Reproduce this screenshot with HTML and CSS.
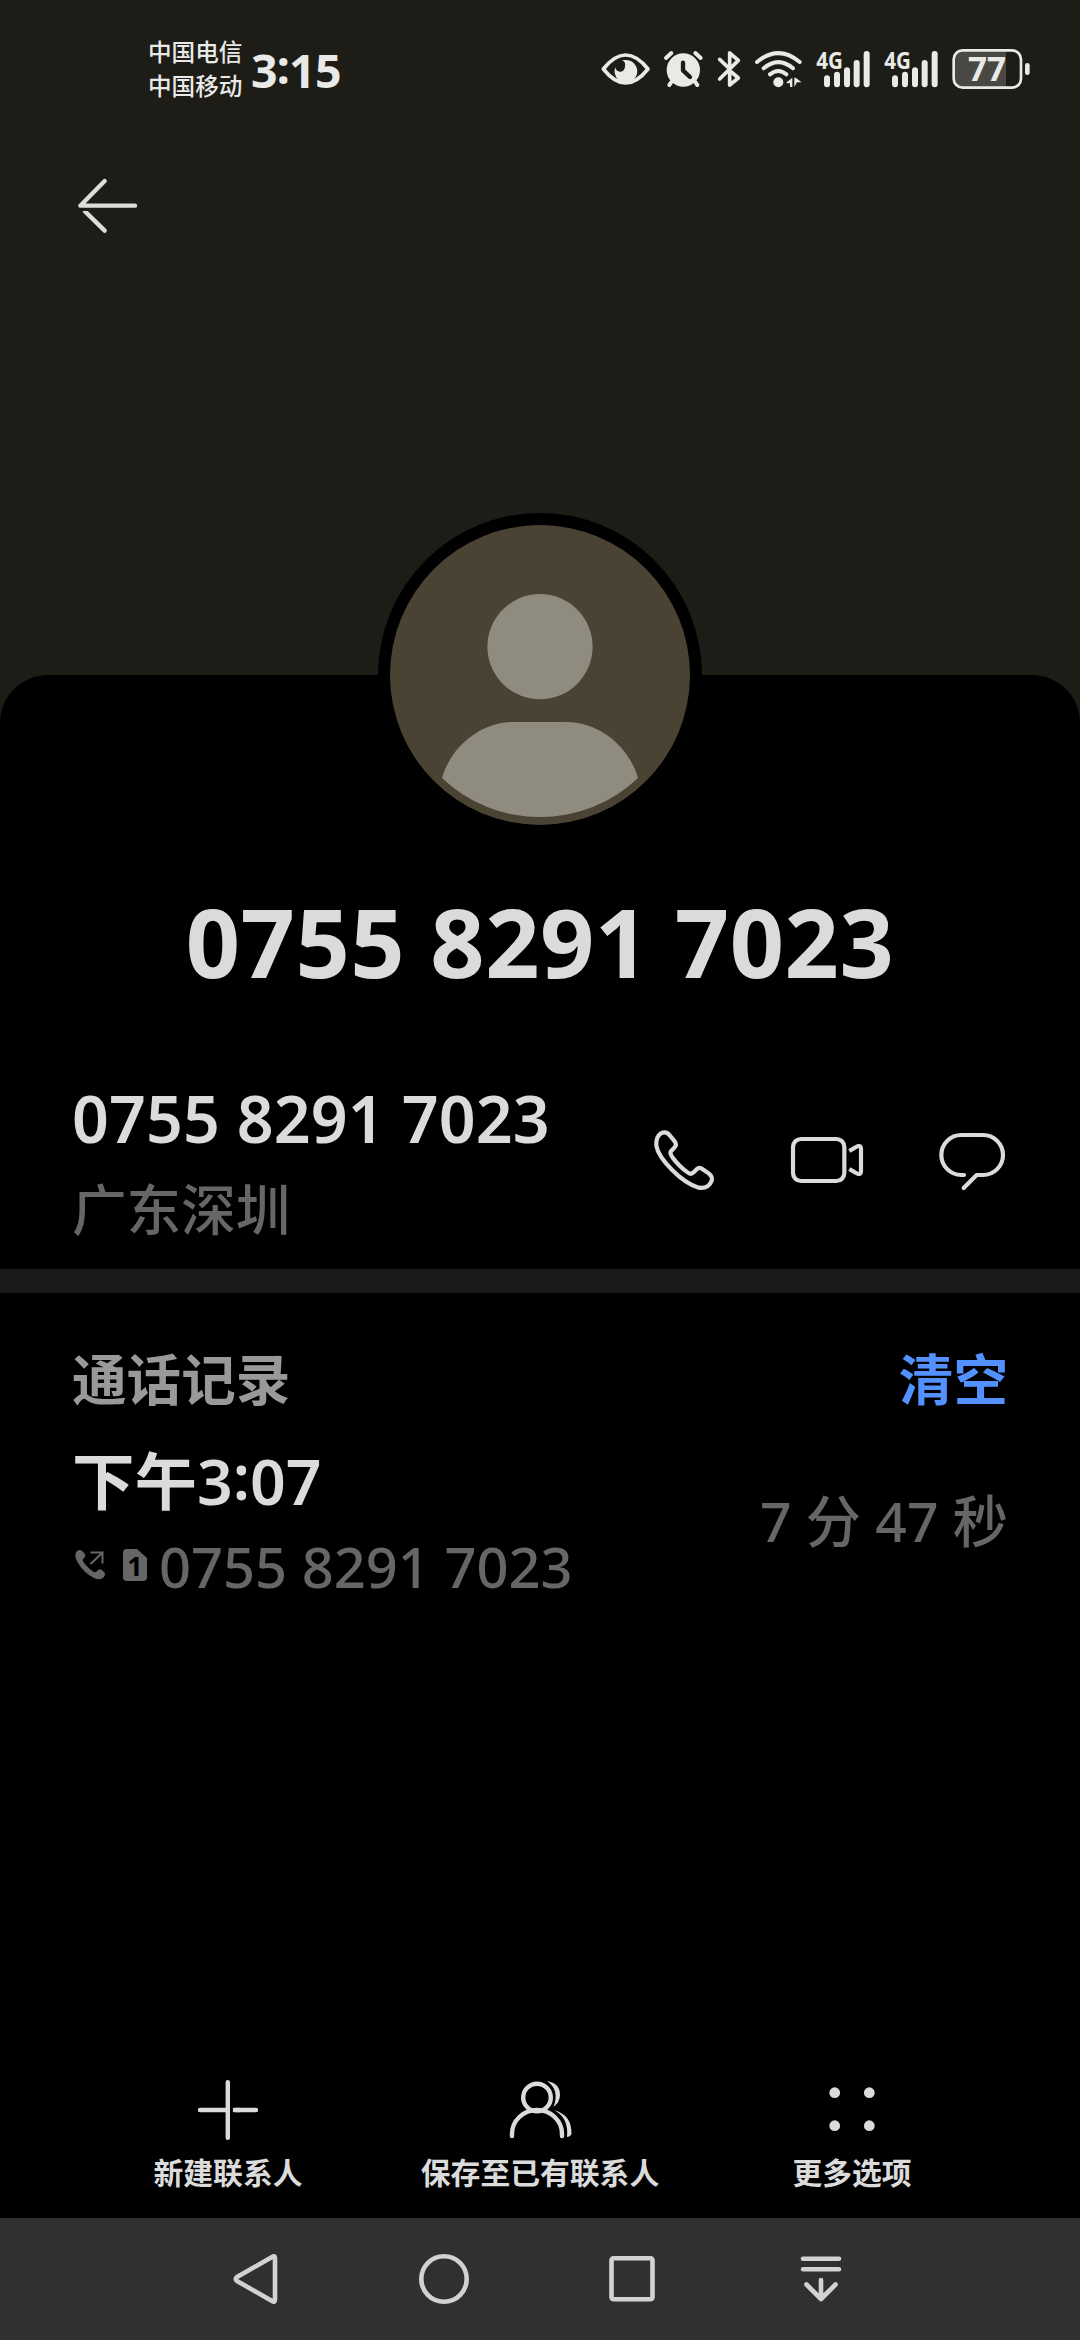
FILE: index.html
```html
<!DOCTYPE html>
<html lang="zh-CN">
<head>
<meta charset="utf-8">
<title>联系人详情</title>
<link rel="stylesheet" href="styles.css">
</head>
<body>
<div class="screen">
  <header class="status">
    <div class="carriers"><span>中国电信</span><span>中国移动</span></div>
    <div class="clock">3<span class="colon">:</span>15</div>
    <div class="status-icons">
      <svg class="eye" width="52" height="42" viewBox="30 54 156 126"><path d="M40 117Q107 33 174 117Q107 201 40 117Z" fill="none" stroke="#e9e9e7" stroke-width="11" stroke-linejoin="round"/><path d="M106 90A34 34 0 1 1 76 112A14 14 0 0 0 91 125Q105 124 105 108Q108 97 96 91Z" fill="#e9e9e7"/></svg>
      <svg class="alarm" width="42" height="42" viewBox="217 54 126 126"><circle cx="281" cy="120" r="50" fill="#e9e9e7"/><path d="M229 84L245 69M333 84L317 69M246 155L239 165M316 155L323 165" stroke="#e9e9e7" stroke-width="12" stroke-linecap="round"/><path d="M280 98V121L301 141" fill="none" stroke="#1d1c17" stroke-width="13" stroke-linecap="round" stroke-linejoin="round"/></svg>
      <svg class="bluetooth" width="26" height="42" viewBox="378 54 78 126"><path d="M389 88L419 117M389 147L445 91L419 69V108M445 144L419 165V132L424 126Z" fill="none" stroke="#e9e9e7" stroke-width="11" stroke-linecap="round" stroke-linejoin="round"/></svg>
      <svg class="wifi" width="52" height="42" viewBox="490 54 156 126"><g fill="none" stroke="#e9e9e7" stroke-width="12" stroke-linecap="round"><path d="M502 96Q566 43 630 96M522 115Q566 78 610 115M541 133Q566 113 590 133"/></g><circle cx="566" cy="157" r="15" fill="#e9e9e7"/><path d="M591 157L608 143V171H601V160H591ZM614 143H618L636 157H622L614 171Z" fill="#e9e9e7"/></svg>
      <svg class="signal" width="58" height="42" viewBox="42 54 174 126"><text class="g4" x="49" y="116" textLength="80" lengthAdjust="spacingAndGlyphs">4G</text><path d="M81 145V163M111 134V163M141 121V163M170 99V163M200 72V163" stroke="#e9e9e7" stroke-width="18" stroke-linecap="round"/></svg>
      <svg class="signal second" width="58" height="42" viewBox="42 54 174 126"><text class="g4" x="49" y="116" textLength="80" lengthAdjust="spacingAndGlyphs">4G</text><path d="M81 145V163M111 134V163M141 121V163M170 99V163M200 72V163" stroke="#e9e9e7" stroke-width="18" stroke-linecap="round"/></svg>
      <svg class="battery" width="80" height="42" viewBox="453 54 240 126"><path d="M487 61H618V172H487Q461 172 461 146V87Q461 61 487 61Z" fill="#494842"/><rect x="461" y="61" width="202" height="112" rx="27" fill="none" stroke="#e9e9e7" stroke-width="8"/><rect x="675" y="99" width="14" height="36" rx="7" fill="#e9e9e7"/><text class="level" x="504" y="153" textLength="114" lengthAdjust="spacingAndGlyphs">77</text></svg>
    </div>
  </header>

  <div class="appbar">
    <svg width="64" height="60" viewBox="78 48 192 180"><g fill="none" stroke="#deded9" stroke-width="13" stroke-linecap="round" stroke-linejoin="round"><path d="M164 63L91 137H255"/><path d="M105 154L164 212"/></g><path d="M80 145H140V153H80Z" fill="#1d1c17"/></svg>
  </div>

  <main class="sheet">
    <svg class="avatar" width="324" height="324" viewBox="378 513 324 324"><circle cx="540" cy="675" r="162"/><circle cx="540" cy="675" r="150" fill="#4a4233"/><circle cx="540" cy="646.7" r="52.6" fill="#908b7f"/><path d="M514 722H566C600 722 629 747 638 778A142.3 142.3 0 0 1 442 778C451 747 480 722 514 722Z" fill="#908b7f"/></svg>
    <h1>0755 8291 7023</h1>

    <section class="number-row">
      <div>
        <div class="number">0755 8291 7023</div>
        <div class="region">广东深圳</div>
      </div>
      <div class="actions">
        <svg width="64" height="64" viewBox="96 114 192 192"><path d="M151 138L164 154Q172 164 163 173L154 182Q148 188 156 200Q176 228 204 248Q213 255 221 247L230 238Q238 230 247 237L267 251Q278 260 275 272Q265 297 236 293C183 278 115 205 109 167Q107 141 123 130Q139 122 151 138Z"/></svg>
        <svg width="76" height="64" viewBox="510 114 228 192"><rect x="522" y="147" width="154" height="126" rx="24"/><path class="butt" d="M691 183L711 171Q726 163 726 178V242Q726 257 711 249L691 237"/></svg>
        <svg width="68" height="64" viewBox="954 114 204 192"><path d="M1032 255H1024A60 60 0 0 1 1024 135H1089A60 60 0 0 1 1089 255H1070L1031 294"/></svg>
      </div>
    </section>

    <section class="history">
      <div class="history-head"><h2>通话记录</h2><a>清空</a></div>
      <div class="call">
        <div>
          <div class="when">下午3<span class="colon">:</span>07</div>
          <div class="call-number">
            <svg class="out" width="30" height="32" viewBox="0 0 30 32"><path d="M2 2Q6-1 9 4Q12 7 8 10Q7 12 10 15Q15 21 19 23Q21 24 23 21Q26 19 29 23Q31 25 29 28Q25 32 19 29Q9 24 3 14Q-2 6 2 2Z" fill="#666"/><path d="M15.5 3.5H27.5V14.5M15.5 15L27 4" fill="none" stroke="#666" stroke-width="2"/></svg>
            <svg class="sim" width="24" height="32" viewBox="0 0 24 32"><path d="M4 0H14L24 9V28Q24 32 20 32H4Q0 32 0 28V4Q0 0 4 0Z" fill="#666"/><text x="12" y="26.5" text-anchor="middle">1</text></svg>
            <span>0755 8291 7023</span>
          </div>
        </div>
        <div class="duration">7 分 47 秒</div>
      </div>
    </section>
  </main>

  <footer class="toolbar">
    <div class="tool"><svg width="64" height="64" viewBox="196 2078 64 64"><path d="M227.8 2082.2V2137.8M200 2110H227M236 2110H256"/><path class="butt" d="M232.9 2110H240"/></svg><span>新建联系人</span></div>
    <div class="tool"><svg width="64" height="64" viewBox="508 2078 64 64"><circle cx="537" cy="2097.5" r="13.8"/><path d="M512 2136V2134A25 24 0 0 1 562 2134V2136"/><path class="solid" d="M547 2081Q560 2083 560 2095Q560 2102 553.5 2107Q560 2090 547 2081ZM554 2110Q572 2115 571.5 2134Q570 2137 567 2137Q569 2118 554 2110Z"/></svg><span>保存至已有联系人</span></div>
    <div class="tool"><svg width="64" height="64" viewBox="820 2078 64 64"><g class="solid"><circle cx="834.7" cy="2092.7" r="5.4"/><circle cx="869.3" cy="2092.7" r="5.4"/><circle cx="834.7" cy="2125.7" r="5.4"/><circle cx="869.3" cy="2125.7" r="5.4"/></g></svg><span>更多选项</span></div>
  </footer>

  <nav class="navbar">
    <svg width="60" height="60" viewBox="225 2249 60 60"><path d="M272 2257L237 2277Q234.5 2279 237 2281L272 2301Q275 2303 275 2299.5V2258.5Q275 2255 272 2257Z"/></svg>
    <svg width="60" height="60" viewBox="413.7 2249 60 60"><circle cx="443.7" cy="2279" r="22.7"/></svg>
    <svg width="60" height="60" viewBox="602 2249 60 60"><rect x="611.5" y="2258.3" width="41" height="41" rx="2"/></svg>
    <svg width="60" height="60" viewBox="791 2249 60 60"><path d="M803 2258.7H839M803 2269.3H839M821 2280V2298M806.5 2284.5L821 2299L835.5 2284.5"/></svg>
  </nav>
</div>
</body>
</html>
```

FILE: styles.css
```css
* { box-sizing: border-box; }
body { margin: 0; background: #000; }
.screen {
  width: 1080px;
  height: 2340px;
  display: flex;
  flex-direction: column;
  background: #1d1c17;
  color: #dbdbdb;
  font-family: "Noto Sans", "Noto Sans CJK SC", sans-serif;
  overflow: hidden;
}
svg { display: block; flex: none; overflow: visible; }
h1, h2 { margin: 0; }
.colon { position: relative; top: -0.08em; }

.status {
  height: 140px;
  padding: 0 49px 0 148px;
  display: flex;
  align-items: flex-start;
  color: #e9e9e7;
}
.carriers {
  display: flex;
  flex-direction: column;
  padding-top: 34px;
  width: 103px;
  font: 500 23.6px/34px "Noto Sans CJK SC", sans-serif;
}
.clock { padding-top: 40px; font-size: 46.5px; line-height: 60px; font-weight: 700; letter-spacing: -0.8px; }
.status-icons { display: flex; margin-left: auto; padding-top: 48px; }
.alarm { margin-left: 10px; }
.bluetooth { margin-left: 12px; }
.wifi { margin-left: 11px; }
.signal { margin-left: 9px; }
.signal.second { margin-left: 10px; }
.battery { margin-left: 11px; }
.g4, .level { fill: #e9e9e7; font-weight: 700; }
.g4 { font-size: 70px; }
.level { font-size: 101px; }

.appbar { height: 535px; padding: 36px 76px; }

.sheet {
  flex: 1;
  background: #000;
  border-radius: 48px 48px 0 0;
  display: flex;
  flex-direction: column;
}
.avatar { margin: -162px auto 0; }
h1 {
  margin-top: 44px;
  text-align: center;
  font-size: 95px;
  line-height: 120px;
  font-weight: 700;
  letter-spacing: 0.5px;
}
.number-row {
  display: flex;
  justify-content: space-between;
  height: 292px;
  padding: 77px 72px 0;
  border-bottom: 24px solid #1a1a1a;
}
.number { font-size: 64.5px; line-height: 80px; font-weight: 600; letter-spacing: 0.1px; }
.region { margin-top: 11px; font-size: 54.6px; line-height: 80px; font-weight: 500; color: #666; }
.actions { display: flex; margin-top: 50px; margin-right: 2px; }
.actions svg { fill: none; stroke: #dbdbdb; stroke-width: 12.5; stroke-linecap: round; stroke-linejoin: round; }
.actions svg + svg { margin-left: 73px; }
.actions .butt, .tool .butt { stroke-linecap: butt; }

.history { padding: 46px 72px 0; }
.history-head { display: flex; justify-content: space-between; font-size: 54.6px; line-height: 80px; }
.history-head h2 { font-size: 54.6px; font-weight: 600; color: #999; }
.history-head a { font-weight: 600; color: #5291ff; }
.call { display: flex; justify-content: space-between; margin-top: 22px; }
.when { font-size: 62.5px; line-height: 80px; font-weight: 600; }
.call-number { display: flex; align-items: flex-start; margin-top: 10px; padding-left: 3px; color: #666; font-size: 56px; line-height: 70px; font-weight: 500; }
.call-number svg { margin-top: 18px; }
.call-number .sim { margin: 18px 12px 0 18px; }
.sim text { font-size: 27px; font-weight: 700; }
.duration { margin-top: 40px; font-size: 55.2px; line-height: 80px; font-weight: 500; color: #666; }

.toolbar {
  height: 140px;
  padding: 0 72px;
  display: grid;
  grid-template-columns: repeat(3, 312px);
  background: #000;
}
.tool { display: flex; flex-direction: column; align-items: center; gap: 11px; font-size: 29.8px; line-height: 40px; font-weight: 600; }
.tool svg { fill: none; stroke: #dbdbdb; stroke-width: 4.4; stroke-linecap: round; }
.tool .solid { fill: #dbdbdb; stroke: none; }

.navbar { height: 122px; padding: 31px 0 0 225px; display: flex; gap: 128.6px; background: #303030; }
.navbar svg { fill: none; stroke: #d2d2d2; stroke-width: 4.6; stroke-linecap: round; stroke-linejoin: round; }
```
